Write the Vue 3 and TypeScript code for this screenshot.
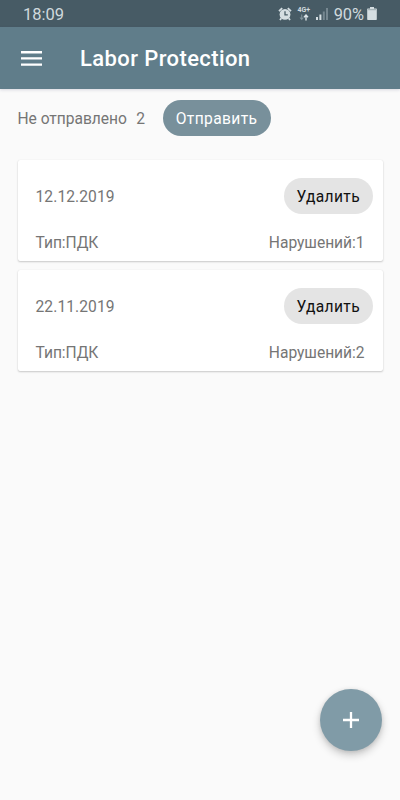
<script setup lang="ts">
import { ref } from 'vue'

interface Report {
  date: string
  type: string
  violations: number
}

const reports = ref<Report[]>([
  { date: '12.12.2019', type: 'ПДК', violations: 1 },
  { date: '22.11.2019', type: 'ПДК', violations: 2 },
])

function removeReport(index: number): void {
  reports.value.splice(index, 1)
}
</script>

<template>
  <div class="screen">
    <div class="status">
      <span class="clock">18:09</span>
      <svg class="alarm" viewBox="0 0 14 14" width="14" height="14">
        <path d="M1 4.2 4.2 1.2M13 4.2 9.8 1.2M3.3 11.3 2 13M10.7 11.3 12 13" stroke="#d5dee2" stroke-width="1.8" fill="none" />
        <circle cx="7" cy="7.4" r="5.4" fill="#d5dee2" />
        <path d="M7 4.2V7.8H9.8" stroke="#485c66" stroke-width="1.3" fill="none" />
      </svg>
      <span class="network">
        <span class="generation">4G+</span>
        <svg viewBox="0 0 10 7" width="10" height="7">
          <path d="M2.7 .5V5M1 3.5 2.7 5.5 4.4 3.5" stroke="#80929a" stroke-width="1.1" fill="none" />
          <path d="M7 1.5V6.5M5 3.2 7 1 9 3.2" stroke="#dce4e8" stroke-width="1.4" fill="none" />
        </svg>
      </span>
      <svg class="signal" viewBox="0 0 12 12" width="12" height="12">
        <path d="M0 9h2v3H0zM3.4 6.5h2V12h-2z" fill="#d5dee2" />
        <path d="M6.8 3.5h2V12h-2zM10 0h2v12h-2z" fill="#768790" />
      </svg>
      <span class="percent">90%</span>
      <svg class="battery" viewBox="0 0 10 13" width="10" height="13">
        <path d="M3 0h4v1.5h2.2q.6 0 .6.6v10.2q0 .6-.6.6H.8q-.6 0-.6-.6V2.1q0-.6.6-.6H3z" fill="#d5dee2" />
        <path d="M1 2.2h8v1H1z" fill="#9caab0" />
      </svg>
    </div>

    <header class="toolbar">
      <button class="menu" aria-label="Menu">
        <svg viewBox="0 0 21 15" width="21" height="15">
          <path d="M0 0h21v2.4H0zM0 6.2h21v2.4H0zM0 12.4h21v2.4H0z" fill="#fff" />
        </svg>
      </button>
      <h1>Labor Protection</h1>
    </header>

    <main>
      <section class="pending">
        <span class="pending-label">Не отправлено</span>
        <span class="pending-count">{{ reports.length }}</span>
        <button class="chip send">Отправить</button>
      </section>

      <section class="cards">
        <article v-for="(report, index) in reports" :key="report.date" class="card">
          <div class="row top">
            <span class="date">{{ report.date }}</span>
            <button class="chip delete" @click="removeReport(index)">Удалить</button>
          </div>
          <div class="row bottom">
            <span class="type">Тип:{{ report.type }}</span>
            <span class="violations">Нарушений:{{ report.violations }}</span>
          </div>
        </article>
      </section>
    </main>

    <button class="fab" aria-label="Add">
      <svg viewBox="0 0 16 16" width="16" height="16">
        <path d="M8 0V16M0 8H16" stroke="#fff" stroke-width="2.3" />
      </svg>
    </button>
  </div>
</template>

<style>
body {
  background: #fafafa;
}
</style>

<style scoped>
.screen {
  position: relative;
  height: 800px;
  overflow: hidden;
  background: #fafafa;
  font-family: Roboto, "Noto Sans", sans-serif;
  color: #757575;
  font-size: 15.6px;
  letter-spacing: -0.04px;
}

button {
  border: 0;
  padding: 0;
  margin: 0;
  font: inherit;
  display: flex;
  align-items: center;
  justify-content: center;
}

.status {
  height: 27px;
  box-sizing: border-box;
  padding: 0 23px;
  display: flex;
  align-items: center;
  background: #475b65;
  color: #d0d9dd;
}

.clock {
  font-size: 16.5px;
  margin-right: auto;
  padding-top: 1px;
}

.alarm {
  margin-right: 5px;
}

.network {
  display: flex;
  flex-direction: column;
  align-items: center;
  width: 14px;
  margin-right: 5px;
}

.generation {
  font-size: 7px;
  line-height: 7px;
  font-weight: 700;
}

.signal {
  margin-right: 6px;
  margin-top: 1px;
}

.percent {
  font-size: 16.4px;
  margin-right: 3px;
  padding-top: 1px;
}

.toolbar {
  height: 62px;
  display: flex;
  align-items: center;
  padding-left: 21px;
  background: #607d8a;
  box-shadow: 0 1px 3px rgba(40, 40, 90, 0.16);
}

.menu {
  background: transparent;
  margin-right: 38px;
}

h1 {
  margin: 0;
  padding-top: 2px;
  color: #fff;
  font-size: 22px;
  font-weight: 500;
  line-height: 30px;
  letter-spacing: 0.4px;
}

main {
  padding: 11px 17.5px 0 17.5px;
}

.pending {
  display: flex;
  align-items: center;
  height: 36px;
}

.pending-label,
.pending-count {
  padding-top: 1px;
}

.pending-count {
  margin-left: 9.5px;
  margin-right: 17.5px;
}

.chip {
  height: 36px;
  box-sizing: border-box;
  padding-top: 1px;
  border-radius: 18px;
  font-size: 15.6px;
  letter-spacing: 0.37px;
}

.send {
  width: 108px;
  background: #78909b;
  color: #fff;
}

.delete {
  width: 89.5px;
  background: #e4e4e4;
  color: #111;
}

.cards {
  display: flex;
  flex-direction: column;
  gap: 9px;
  padding-top: 24px;
}

.card {
  height: 101px;
  box-sizing: border-box;
  padding: 18px 9.5px 0 18px;
  border-radius: 2px;
  background: #fff;
  box-shadow: 0 1px 2px rgba(0, 0, 0, 0.2), 0 0 1px rgba(0, 0, 0, 0.1);
}

.row {
  display: flex;
  align-items: center;
  justify-content: space-between;
}

.top {
  height: 36px;
}

.date {
  padding-top: 2px;
  letter-spacing: 0.08px;
}

.bottom {
  height: 20px;
  margin-top: 19px;
  padding-right: 8.5px;
}

.fab {
  position: absolute;
  left: 320px;
  top: 689px;
  width: 62px;
  height: 62px;
  border-radius: 50%;
  background: #809ba7;
  box-shadow: 0 4px 8px rgba(0, 0, 0, 0.2), 0 1px 4px rgba(0, 0, 0, 0.1);
}
</style>
